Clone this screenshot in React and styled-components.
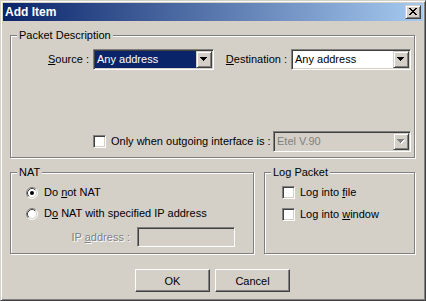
import React from 'react';
import styled, { createGlobalStyle } from 'styled-components';

const FACE = '#d4d0c8';
const SHADOW = '#808080';
const DARK = '#404040';
const FONT = '"Liberation Sans", Arial, sans-serif';

const GlobalStyle = createGlobalStyle`
  html, body { margin: 0; padding: 0; background: ${FACE}; }
  body { font-family: ${FONT}; font-size: 11px; }
`;

const Window = styled.div`
  box-sizing: border-box;
  width: 426px;
  height: 301px;
  background: ${FACE};
  border: 1px solid;
  border-color: ${FACE} ${DARK} ${DARK} ${FACE};
  box-shadow: inset 1px 1px 0 #fff, inset -1px -1px 0 ${SHADOW};
  padding: 2px;
  display: flex;
  flex-direction: column;
  font-family: ${FONT};
  font-size: 11px;
  color: #000;
`;

const TitleBar = styled.div`
  flex: none;
  height: 18px;
  display: flex;
  align-items: center;
  justify-content: space-between;
  padding: 0 2px;
  background: linear-gradient(to right, #0a246a, #a6caf0);
`;

const Title = styled.span`
  color: #fff;
  font-weight: bold;
  font-size: 12px;
  line-height: 18px;
  white-space: nowrap;
`;

const CloseButton = styled.div`
  box-sizing: border-box;
  width: 16px;
  height: 14px;
  flex: none;
  background: ${FACE};
  border: 1px solid;
  border-color: ${FACE} ${DARK} ${DARK} ${FACE};
  box-shadow: inset 1px 1px 0 #fff, inset -1px -1px 0 ${SHADOW};
  padding: 2px 0 0 3px;
  display: flex;
  align-items: flex-start;
`;

const Glyph = styled.svg`
  display: block;
  flex: none;
`;

const Body = styled.div`
  display: flex;
  flex-direction: column;
  padding: 14px 8px 0 7px;
`;

const GroupBox = styled.div`
  position: relative;
  box-sizing: border-box;
  flex: none;
  width: ${(p) => p.$w}px;
  height: ${(p) => p.$h}px;
  border: 1px solid ${SHADOW};
  box-shadow: inset 1px 1px 0 #fff, 1px 1px 0 #fff;
  padding: ${(p) => p.$pad};
  display: flex;
  flex-direction: column;
`;

const Legend = styled.span`
  position: absolute;
  top: -7px;
  left: 6px;
  padding: 0 2px;
  background: ${FACE};
  line-height: 13px;
  white-space: nowrap;
`;

const Row = styled.div`
  display: flex;
  align-items: center;
  height: ${(p) => p.$h || 13}px;
  margin-top: ${(p) => p.$top || 0}px;
  padding-left: ${(p) => p.$indent || 0}px;
`;

const Text = styled.span`
  line-height: 13px;
  white-space: nowrap;
  width: ${(p) => (p.$w ? `${p.$w}px` : 'auto')};
  text-align: ${(p) => (p.$right ? 'right' : 'left')};
  margin-left: ${(p) => p.$ml || 0}px;
  margin-right: ${(p) => p.$mr || 0}px;
  flex: none;
  color: ${(p) => (p.$disabled ? SHADOW : '#000')};
  text-shadow: ${(p) => (p.$disabled ? '1px 1px 0 #fff' : 'none')};
`;

const Spacer = styled.div`
  flex: 1;
`;

const U = styled.span`
  text-decoration: underline;
`;

const Combo = styled.div`
  box-sizing: border-box;
  flex: none;
  width: ${(p) => p.$w}px;
  height: 21px;
  display: flex;
  border: 1px solid;
  border-color: ${SHADOW} #fff #fff ${SHADOW};
  box-shadow: inset 1px 1px 0 ${DARK}, inset -1px -1px 0 ${FACE};
  padding: 1px;
  background: ${(p) => (p.$disabled ? FACE : '#fff')};
`;

const ComboField = styled.div`
  flex: 1;
  min-width: 0;
  padding-left: 2px;
  line-height: 17px;
  white-space: nowrap;
  overflow: hidden;
  background: ${(p) => (p.$selected ? '#0a246a' : 'transparent')};
  color: ${(p) => (p.$selected ? '#fff' : p.$disabled ? SHADOW : '#000')};
`;

const DropButton = styled.div`
  box-sizing: border-box;
  flex: none;
  width: 16px;
  height: 17px;
  background: ${FACE};
  border: 1px solid;
  border-color: ${FACE} ${DARK} ${DARK} ${FACE};
  box-shadow: inset 1px 1px 0 #fff, inset -1px -1px 0 ${SHADOW};
  padding: 5px 0 0 3px;
  display: flex;
  align-items: flex-start;
`;

const CheckBox = styled.span`
  box-sizing: border-box;
  display: block;
  flex: none;
  width: 13px;
  height: 13px;
  border: 1px solid;
  border-color: ${SHADOW} #fff #fff ${SHADOW};
  box-shadow: inset 1px 1px 0 ${DARK}, inset -1px -1px 0 ${FACE};
  background: #fff;
`;

const TextBox = styled.div`
  box-sizing: border-box;
  flex: none;
  width: ${(p) => p.$w}px;
  height: 20px;
  border: 1px solid;
  border-color: ${SHADOW} #fff #fff ${SHADOW};
  box-shadow: inset 1px 1px 0 ${DARK}, inset -1px -1px 0 ${FACE};
  background: ${FACE};
`;

const BottomRow = styled.div`
  display: flex;
  gap: 10px;
  margin-top: 14px;
`;

const ButtonBar = styled.div`
  display: flex;
  justify-content: center;
  gap: 5px;
  margin-top: 15px;
`;

const Button = styled.button`
  box-sizing: border-box;
  width: 75px;
  height: 23px;
  padding: 0;
  font-family: ${FONT};
  font-size: 11px;
  color: #000;
  background: ${FACE};
  border: 1px solid;
  border-color: #fff ${DARK} ${DARK} #fff;
  box-shadow: inset -1px -1px 0 ${SHADOW};
  outline: none;
`;

const XGlyph = () => (
  <Glyph width="8" height="7" viewBox="0 0 8 7" shapeRendering="crispEdges">
    <path
      fill="#000"
      d="M0 0h2v1H0zM6 0h2v1H6zM1 1h2v1H1zM5 1h2v1H5zM2 2h4v1H2zM3 3h2v1H3zM2 4h4v1H2zM1 5h2v1H1zM5 5h2v1H5zM0 6h2v1H0zM6 6h2v1H6z"
    />
  </Glyph>
);

const ARROW = 'M0 0h7v1H0zM1 1h5v1H1zM2 2h3v1H2zM3 3h1v1H3z';

const Arrow = ({ disabled }) => (
  <Glyph width="8" height="5" viewBox="0 0 8 5" shapeRendering="crispEdges">
    {disabled ? (
      <>
        <path fill="#fff" d={ARROW} transform="translate(1 1)" />
        <path fill={SHADOW} d={ARROW} />
      </>
    ) : (
      <path fill="#000" d={ARROW} />
    )}
  </Glyph>
);

const RadioIcon = ({ checked }) => (
  <Glyph width="12" height="12" viewBox="0 0 12 12">
    <circle cx="6" cy="6" r="5" fill="#fff" />
    <path d="M2.11 9.89A5.5 5.5 0 0 1 9.89 2.11" stroke={SHADOW} fill="none" />
    <path d="M9.89 2.11A5.5 5.5 0 0 1 2.11 9.89" stroke="#fff" fill="none" />
    <path d="M2.82 9.18A4.5 4.5 0 0 1 9.18 2.82" stroke={DARK} fill="none" />
    <path d="M9.18 2.82A4.5 4.5 0 0 1 2.82 9.18" stroke={FACE} fill="none" />
    {checked && <circle cx="6" cy="6" r="2" fill="#000" />}
  </Glyph>
);

const ComboBox = ({ w, value, selected, disabled }) => (
  <Combo $w={w} $disabled={disabled}>
    <ComboField $selected={selected} $disabled={disabled}>
      {value}
    </ComboField>
    <DropButton>
      <Arrow disabled={disabled} />
    </DropButton>
  </Combo>
);

export default function App() {
  return (
    <>
      <GlobalStyle />
      <Window>
        <TitleBar>
          <Title>Add Item</Title>
          <CloseButton>
            <XGlyph />
          </CloseButton>
        </TitleBar>
        <Body>
          <GroupBox $w={405} $h={123} $pad="13px 3px 0 0">
            <Legend>Packet Description</Legend>
            <Row $h={21}>
              <Text $w={78} $right $mr={4}>
                <U>S</U>ource :
              </Text>
              <ComboBox w={121} value="Any address" selected />
              <Spacer />
              <Text $mr={4}>
                <U>D</U>estination :
              </Text>
              <ComboBox w={120} value="Any address" />
            </Row>
            <Row $h={21} $top={61} $indent={82}>
              <CheckBox />
              <Text $ml={5}>Only when outgoing interface is :</Text>
              <Spacer />
              <ComboBox w={138} value="Etel V.90" disabled />
            </Row>
          </GroupBox>
          <BottomRow>
            <GroupBox $w={244} $h={82} $pad="13px 0 0 15px">
              <Legend>NAT</Legend>
              <Row>
                <RadioIcon checked />
                <Text $ml={6}>
                  Do <U>n</U>ot NAT
                </Text>
              </Row>
              <Row $top={8}>
                <RadioIcon />
                <Text $ml={6}>
                  D<U>o</U> NAT with specified IP address
                </Text>
              </Row>
              <Row $h={20} $top={7}>
                <Text $w={104} $right $mr={7} $disabled>
                  IP <U>a</U>ddress :
                </Text>
                <TextBox $w={98} />
              </Row>
            </GroupBox>
            <GroupBox $w={151} $h={82} $pad="13px 0 0 17px">
              <Legend>Log Packet</Legend>
              <Row>
                <CheckBox />
                <Text $ml={5}>
                  Log into <U>f</U>ile
                </Text>
              </Row>
              <Row $top={9}>
                <CheckBox />
                <Text $ml={5}>
                  Log into <U>w</U>indow
                </Text>
              </Row>
            </GroupBox>
          </BottomRow>
          <ButtonBar>
            <Button>OK</Button>
            <Button>Cancel</Button>
          </ButtonBar>
        </Body>
      </Window>
    </>
  );
}
